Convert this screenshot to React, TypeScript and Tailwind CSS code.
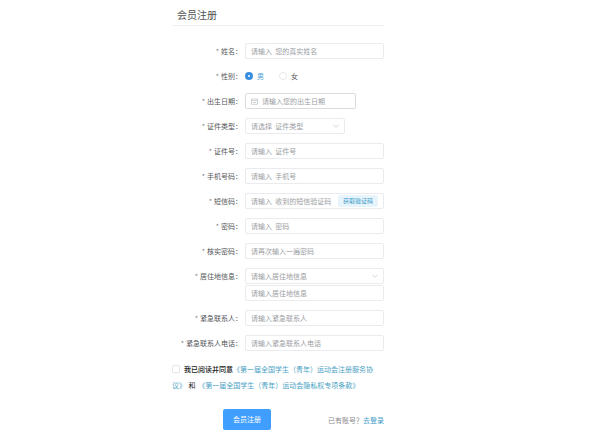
import { useState, type ReactNode } from "react";

const boxClass =
  "block h-4 w-full min-w-0 rounded-[2px] border border-[#e9ebee] bg-white px-[5px] text-[7px] leading-[14px] outline-none placeholder:text-[#9b9ea4] placeholder:opacity-100";

function Row({ label, htmlFor, children }: { label: string; htmlFor: string; children: ReactNode }) {
  return (
    <div className="flex items-start">
      <label
        htmlFor={htmlFor}
        className="w-[73px] shrink-0 whitespace-nowrap pr-[3px] text-right text-[7px] leading-4 text-[#55575a]"
      >
        <span className="mr-[2px] text-[#808080]">*</span>
        {label}：
      </label>
      <div className="min-w-0 flex-1">{children}</div>
    </div>
  );
}

function TextRow({ id, label, placeholder, type = "text" }: { id: string; label: string; placeholder: string; type?: string }) {
  return (
    <Row label={label} htmlFor={id}>
      <input id={id} type={type} placeholder={placeholder} className={`${boxClass} text-[#606266]`} />
    </Row>
  );
}

function Dropdown({ id, text }: { id: string; text: string }) {
  return (
    <div className="relative">
      <select id={id} defaultValue="" className={`${boxClass} appearance-none text-[#9b9ea4]`}>
        <option value="">{text}</option>
      </select>
      <svg
        aria-hidden="true"
        viewBox="0 0 8 8"
        className="pointer-events-none absolute right-[5px] top-1 size-2 fill-none stroke-[#c8cbd1]"
      >
        <path d="M1.5 2.8 4 5.3l2.5-2.5" strokeWidth="0.8" />
      </svg>
    </div>
  );
}

function Radio({ id, label, checked, onSelect }: { id: string; label: string; checked: boolean; onSelect: () => void }) {
  return (
    <label
      htmlFor={id}
      className={`flex items-center gap-1 text-[7px] leading-4 ${checked ? "text-[#4b9fd8]" : "text-[#55575a]"}`}
    >
      <input
        id={id}
        type="radio"
        name="gender"
        checked={checked}
        onChange={onSelect}
        className="size-2 appearance-none rounded-full border border-[#e6e8ec] bg-white checked:border-[3px] checked:border-[#3a8ee0]"
      />
      {label}
    </label>
  );
}

export default function App() {
  const [gender, setGender] = useState("male");
  return (
    <main className="ml-[172px] max-w-[212px] pt-[6px] font-['Noto_Sans_CJK_SC',sans-serif]">
      <h1 className="border-b border-[#f0f0f0] pb-px pl-[5px] text-[10px] leading-[18px] text-[#505256]">
        会员注册
      </h1>
      <form className="pt-[17px]" onSubmit={(e) => e.preventDefault()}>
        <div className="flex flex-col gap-[9px]">
          <TextRow id="name" label="姓名" placeholder="请输入 &nbsp;您的真实姓名" />
          <Row label="性别" htmlFor="male">
            <div className="flex gap-[15px]">
              <Radio id="male" label="男" checked={gender === "male"} onSelect={() => setGender("male")} />
              <Radio id="female" label="女" checked={gender === "female"} onSelect={() => setGender("female")} />
            </div>
          </Row>
          <Row label="出生日期" htmlFor="birthday">
            <div className="flex h-4 w-4/5 items-center gap-1 rounded-[2px] border border-[#d9dbdf] bg-white pl-[5px]">
              <svg aria-hidden="true" viewBox="0 0 7 7" className="size-[7px] shrink-0 fill-none stroke-[#b0b4bb]">
                <path d="M.5 1h6v5.3h-6zM.5 2.7h6M2 4.5h3" strokeWidth="0.6" />
              </svg>
              <input
                id="birthday"
                type="text"
                placeholder="请输入您的出生日期"
                className="w-full min-w-0 text-[7px] leading-[14px] text-[#606266] outline-none placeholder:text-[#9b9ea4] placeholder:opacity-100"
              />
            </div>
          </Row>
          <Row label="证件类型" htmlFor="idType">
            <div className="w-[72%]">
              <Dropdown id="idType" text="请选择 &nbsp;证件类型" />
            </div>
          </Row>
          <TextRow id="idNumber" label="证件号" placeholder="请输入 &nbsp;证件号" />
          <TextRow id="phone" label="手机号码" placeholder="请输入 &nbsp;手机号" />
          <Row label="短信码" htmlFor="sms">
            <div className="flex h-4 items-center rounded-[2px] border border-[#e9ebee] bg-white px-[5px]">
              <input
                id="sms"
                type="text"
                placeholder="请输入 &nbsp;收到的短信验证码"
                className="w-full min-w-0 text-[7px] leading-[14px] text-[#606266] outline-none placeholder:text-[#9b9ea4] placeholder:opacity-100"
              />
              <button
                type="button"
                className="h-3 shrink-0 whitespace-nowrap rounded-[2px] bg-[#e8f4fc] px-[5px] text-[6px] leading-3 text-[#3a9bc8]"
              >
                获取验证码
              </button>
            </div>
          </Row>
          <TextRow id="password" label="密码" placeholder="请输入 &nbsp;密码" type="password" />
          <TextRow id="confirm" label="核实密码" placeholder="请再次输入一遍密码" type="password" />
          <Row label="居住地信息" htmlFor="region">
            <div className="flex flex-col gap-px">
              <Dropdown id="region" text="请输入居住地信息" />
              <input
                aria-label="居住地信息"
                type="text"
                placeholder="请输入居住地信息"
                className={`${boxClass} text-[#606266]`}
              />
            </div>
          </Row>
          <TextRow id="contact" label="紧急联系人" placeholder="请输入紧急联系人" />
          <TextRow id="contactPhone" label="紧急联系人电话" placeholder="请输入紧急联系人电话" />
        </div>
        <div className="pt-[10px] text-[7px] leading-4 text-[#4a9fc4]">
          <input
            id="agree"
            type="checkbox"
            className="mr-1 inline-block size-2 appearance-none rounded-[1px] border border-[#e6e8ec] bg-white align-[-1px] checked:bg-[#409eff]"
          />
          <label htmlFor="agree" className="font-medium text-[#222222]">
            我已阅读并同意
          </label>
          <a href="#terms">《第一届全国学生（青年）运动会注册服务协议》</a>
          <span className="mx-px text-[#222222]"> 和 </span>
          <a href="#privacy">《第一届全国学生（青年）运动会隐私权专项条款》</a>
        </div>
        <div className="flex items-center pt-4">
          <button
            type="submit"
            className="ml-[51px] h-[21px] w-12 rounded-[2px] bg-[#409eff] text-[7px] leading-[21px] text-white"
          >
            会员注册
          </button>
          <p className="ml-auto whitespace-nowrap text-[7px] leading-4 text-[#8a8c90]">
            已有账号？
            <a href="#login" className="text-[#3f9bc8]">
              去登录
            </a>
          </p>
        </div>
      </form>
    </main>
  );
}
